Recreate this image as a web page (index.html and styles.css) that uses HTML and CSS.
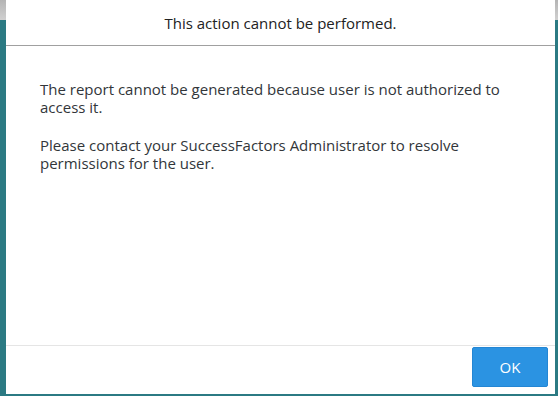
FILE: index.html
```html
<html>
<head>
<meta charset="UTF-8" />
<meta name="viewport" content="width=device-width, initial-scale=1" />
<title>Report error</title>
<link rel="stylesheet" href="styles.css">
</head>
<body>
<div class="dialog" role="alertdialog" aria-labelledby="dialog-title">
  <header class="dialog-header">
    <h1 id="dialog-title">This action cannot be performed.</h1>
  </header>
  <div class="dialog-content">
    <p>The report cannot be generated because user is not authorized to access it.</p>
    <p>Please contact your SuccessFactors Administrator to resolve permissions for the user.</p>
  </div>
  <footer class="dialog-footer">
    <button type="button" class="btn-ok">OK</button>
  </footer>
</div>
</body>
</html>
```

FILE: styles.css
```css
html, body {
  height: 100%;
}

body {
  margin: 0;
  font-family: 'Open Sans', 'Liberation Sans', sans-serif;
  color: #32363a;
  background:
    linear-gradient(to bottom, #b4b4b4 0, #d0d0d0 20px, transparent 20px),
    #2b7a83;
  display: flex;
  box-sizing: border-box;
  padding: 0 3px 2px 6px;
  overflow: hidden;
}

.dialog {
  flex-grow: 1;
  background: #fff;
  display: flex;
  flex-direction: column;
}

.dialog-header {
  height: 45px;
  border-bottom: 1px solid #a0a0a0;
  display: flex;
  align-items: center;
  justify-content: center;
}

.dialog-header h1 {
  margin: 0;
  font-size: 15px;
  font-weight: normal;
  color: #222;
}

.dialog-content {
  flex-grow: 1;
  padding: 34px 50px 0 34px;
  border-bottom: 1px solid #e5e5e5;
}

.dialog-content p {
  margin: 0 0 20px 0;
  font-size: 15px;
  line-height: 18px;
}

.dialog-footer {
  height: 48px;
  display: flex;
  justify-content: flex-end;
  align-items: flex-start;
  padding: 1px 7px 0 0;
  box-sizing: border-box;
}

.btn-ok {
  width: 76px;
  height: 40px;
  background: #2b93e2;
  border: 1px solid #2386d4;
  border-radius: 2px;
  color: #fff;
  font-family: inherit;
  font-size: 15px;
  cursor: pointer;
}
```
